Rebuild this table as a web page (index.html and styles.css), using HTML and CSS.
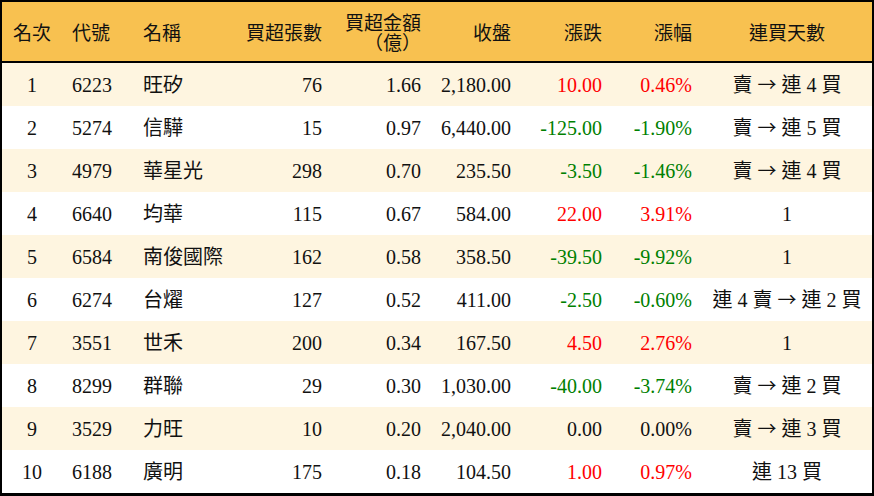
FILE: index.html
```html
<!DOCTYPE html>
<html lang="zh-Hant">
<head>
<meta charset="utf-8">
<title>買超排行</title>
<link rel="stylesheet" href="styles.css">
</head>
<body>
<div class="board">
<table class="rank">
<colgroup>
<col class="c-rank"><col class="c-code"><col class="c-name"><col class="c-vol"><col class="c-amt"><col class="c-close"><col class="c-chg"><col class="c-pct"><col class="c-days">
</colgroup>
<thead>
<tr>
<th class="ctr">名次</th><th class="lft">代號</th><th class="lft">名稱</th><th class="rgt">買超張數</th><th class="rgt"><span class="ln">買超金額</span><span class="ln"><span class="pb">（</span><span class="pb">億</span><span class="pb">）</span></span></th><th class="rgt">收盤</th><th class="rgt">漲跌</th><th class="rgt">漲幅</th><th class="ctr">連買天數</th>
</tr>
</thead>
<tbody>
<tr><td class="ctr">1</td><td class="lft">6223</td><td class="lft">旺矽</td><td class="rgt">76</td><td class="rgt">1.66</td><td class="rgt">2,180.00</td><td class="rgt up">10.00</td><td class="rgt up">0.46%</td><td class="ctr">賣 <span class="arw">→</span> 連 4 買</td></tr>
<tr><td class="ctr">2</td><td class="lft">5274</td><td class="lft">信驊</td><td class="rgt">15</td><td class="rgt">0.97</td><td class="rgt">6,440.00</td><td class="rgt down">-125.00</td><td class="rgt down">-1.90%</td><td class="ctr">賣 <span class="arw">→</span> 連 5 買</td></tr>
<tr><td class="ctr">3</td><td class="lft">4979</td><td class="lft">華星光</td><td class="rgt">298</td><td class="rgt">0.70</td><td class="rgt">235.50</td><td class="rgt down">-3.50</td><td class="rgt down">-1.46%</td><td class="ctr">賣 <span class="arw">→</span> 連 4 買</td></tr>
<tr><td class="ctr">4</td><td class="lft">6640</td><td class="lft">均華</td><td class="rgt">115</td><td class="rgt">0.67</td><td class="rgt">584.00</td><td class="rgt up">22.00</td><td class="rgt up">3.91%</td><td class="ctr">1</td></tr>
<tr><td class="ctr">5</td><td class="lft">6584</td><td class="lft">南俊國際</td><td class="rgt">162</td><td class="rgt">0.58</td><td class="rgt">358.50</td><td class="rgt down">-39.50</td><td class="rgt down">-9.92%</td><td class="ctr">1</td></tr>
<tr><td class="ctr">6</td><td class="lft">6274</td><td class="lft">台燿</td><td class="rgt">127</td><td class="rgt">0.52</td><td class="rgt">411.00</td><td class="rgt down">-2.50</td><td class="rgt down">-0.60%</td><td class="ctr">連 4 賣 <span class="arw">→</span> 連 2 買</td></tr>
<tr><td class="ctr">7</td><td class="lft">3551</td><td class="lft">世禾</td><td class="rgt">200</td><td class="rgt">0.34</td><td class="rgt">167.50</td><td class="rgt up">4.50</td><td class="rgt up">2.76%</td><td class="ctr">1</td></tr>
<tr><td class="ctr">8</td><td class="lft">8299</td><td class="lft">群聯</td><td class="rgt">29</td><td class="rgt">0.30</td><td class="rgt">1,030.00</td><td class="rgt down">-40.00</td><td class="rgt down">-3.74%</td><td class="ctr">賣 <span class="arw">→</span> 連 2 買</td></tr>
<tr><td class="ctr">9</td><td class="lft">3529</td><td class="lft">力旺</td><td class="rgt">10</td><td class="rgt">0.20</td><td class="rgt">2,040.00</td><td class="rgt">0.00</td><td class="rgt">0.00%</td><td class="ctr">賣 <span class="arw">→</span> 連 3 買</td></tr>
<tr><td class="ctr">10</td><td class="lft">6188</td><td class="lft">廣明</td><td class="rgt">175</td><td class="rgt">0.18</td><td class="rgt">104.50</td><td class="rgt up">1.00</td><td class="rgt up">0.97%</td><td class="ctr">連 13 買</td></tr>
</tbody>
</table>
</div>
</body>
</html>
```

FILE: styles.css
```css
html, body {
  margin: 0;
  padding: 0;
  background: #ffffff;
}

.board {
  width: 874px;
  box-sizing: border-box;
  border: 2px solid #000000;
  border-bottom-width: 3px;
  background: #ffffff;
}

.rank {
  width: 870px;
  table-layout: fixed;
  border-collapse: separate;
  border-spacing: 0;
  font-family: "Liberation Serif", "Noto Sans CJK TC", serif;
  font-size: 20px;
  color: #111111;
}

.c-rank { width: 60px; }
.c-code { width: 71px; }
.c-name { width: 99px; }
.c-vol { width: 100px; }
.c-amt { width: 99px; }
.c-close { width: 90px; }
.c-chg { width: 91px; }
.c-pct { width: 90px; }
.c-days { width: 170px; }

.rank th {
  height: 59px;
  padding: 0 10px;
  background: #f8c150;
  border-bottom: 2px solid #000000;
  font-family: "Noto Sans CJK TC", sans-serif;
  font-weight: normal;
  font-size: 19px;
  line-height: 21px;
  vertical-align: middle;
  white-space: nowrap;
}

.ln {
  display: block;
  line-height: 20px;
}

.pb {
  display: inline-block;
  width: 19px;
  text-align: center;
}

.rank td {
  height: 43px;
  padding: 0 10px;
  vertical-align: middle;
  white-space: nowrap;
  line-height: 22px;
}

.arw {
  font-family: "Noto Sans CJK TC", sans-serif;
  font-size: 19px;
}

.rank tbody tr:nth-child(odd) td {
  background: #fef5e0;
}

.ctr { text-align: center; }
.lft { text-align: left; }
.rgt { text-align: right; }

.rank td.up { color: #ff0000; }
.rank td.down { color: #008000; }
```
